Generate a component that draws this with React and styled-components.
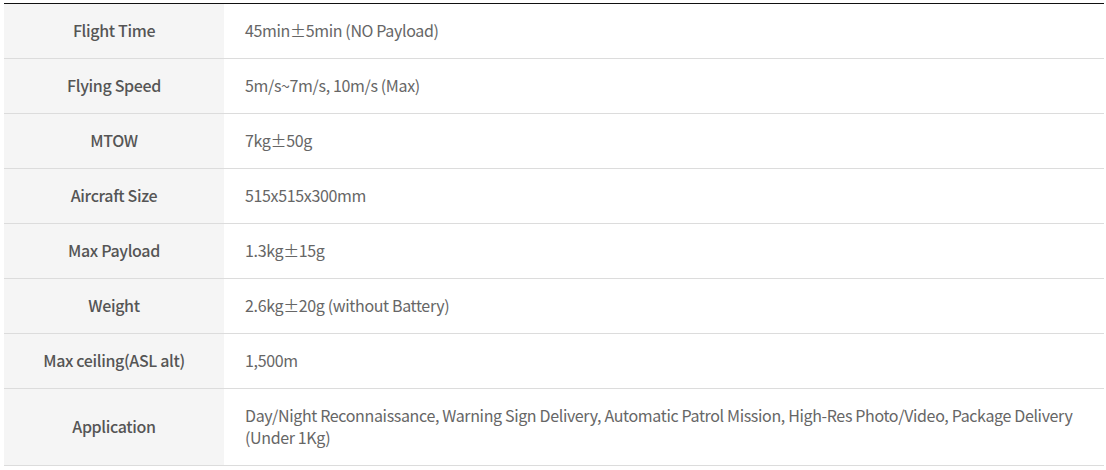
import React from "react";
import styled, { createGlobalStyle } from "styled-components";

const GlobalStyle = createGlobalStyle`
  body {
    margin: 0;
    background: #fff;
    font-family: "Noto Sans CJK KR", "Noto Sans", sans-serif;
  }
`;

const Wrap = styled.div`
  padding: 3px 2px 0 4px;
`;

const SpecTable = styled.table`
  width: 1100px;
  border-collapse: collapse;
  border-top: 1px solid #111;
  table-layout: fixed;
`;

const Row = styled.tr`
  border-bottom: 1px solid #dcdcdc;
`;

const Label = styled.th`
  box-sizing: border-box;
  width: 220px;
  padding: 15px 10px 17px;
  background: #f5f5f5;
  color: #555;
  font-size: 16px;
  font-weight: 500;
  letter-spacing: -0.35px;
  line-height: 22px;
  text-align: center;
  vertical-align: middle;
`;

const Value = styled.td`
  padding: 15px 20px 17px 21px;
  color: #666;
  font-size: 16px;
  font-weight: 400;
  letter-spacing: -0.35px;
  line-height: 22px;
  text-align: left;
  vertical-align: middle;
`;

const specs = [
  ["Flight Time", "45min±5min (NO Payload)"],
  ["Flying Speed", "5m/s~7m/s, 10m/s (Max)"],
  ["MTOW", "7kg±50g"],
  ["Aircraft Size", "515x515x300mm"],
  ["Max Payload", "1.3kg±15g"],
  ["Weight", "2.6kg±20g (without Battery)"],
  ["Max ceiling(ASL alt)", "1,500m"],
  [
    "Application",
    "Day/Night Reconnaissance, Warning Sign Delivery, Automatic Patrol Mission, High-Res Photo/Video, Package Delivery (Under 1Kg)",
  ],
];

export default function App() {
  return (
    <>
      <GlobalStyle />
      <Wrap>
        <SpecTable>
          <tbody>
            {specs.map(([label, value]) => (
              <Row key={label}>
                <Label>{label}</Label>
                <Value>{value}</Value>
              </Row>
            ))}
          </tbody>
        </SpecTable>
      </Wrap>
    </>
  );
}
